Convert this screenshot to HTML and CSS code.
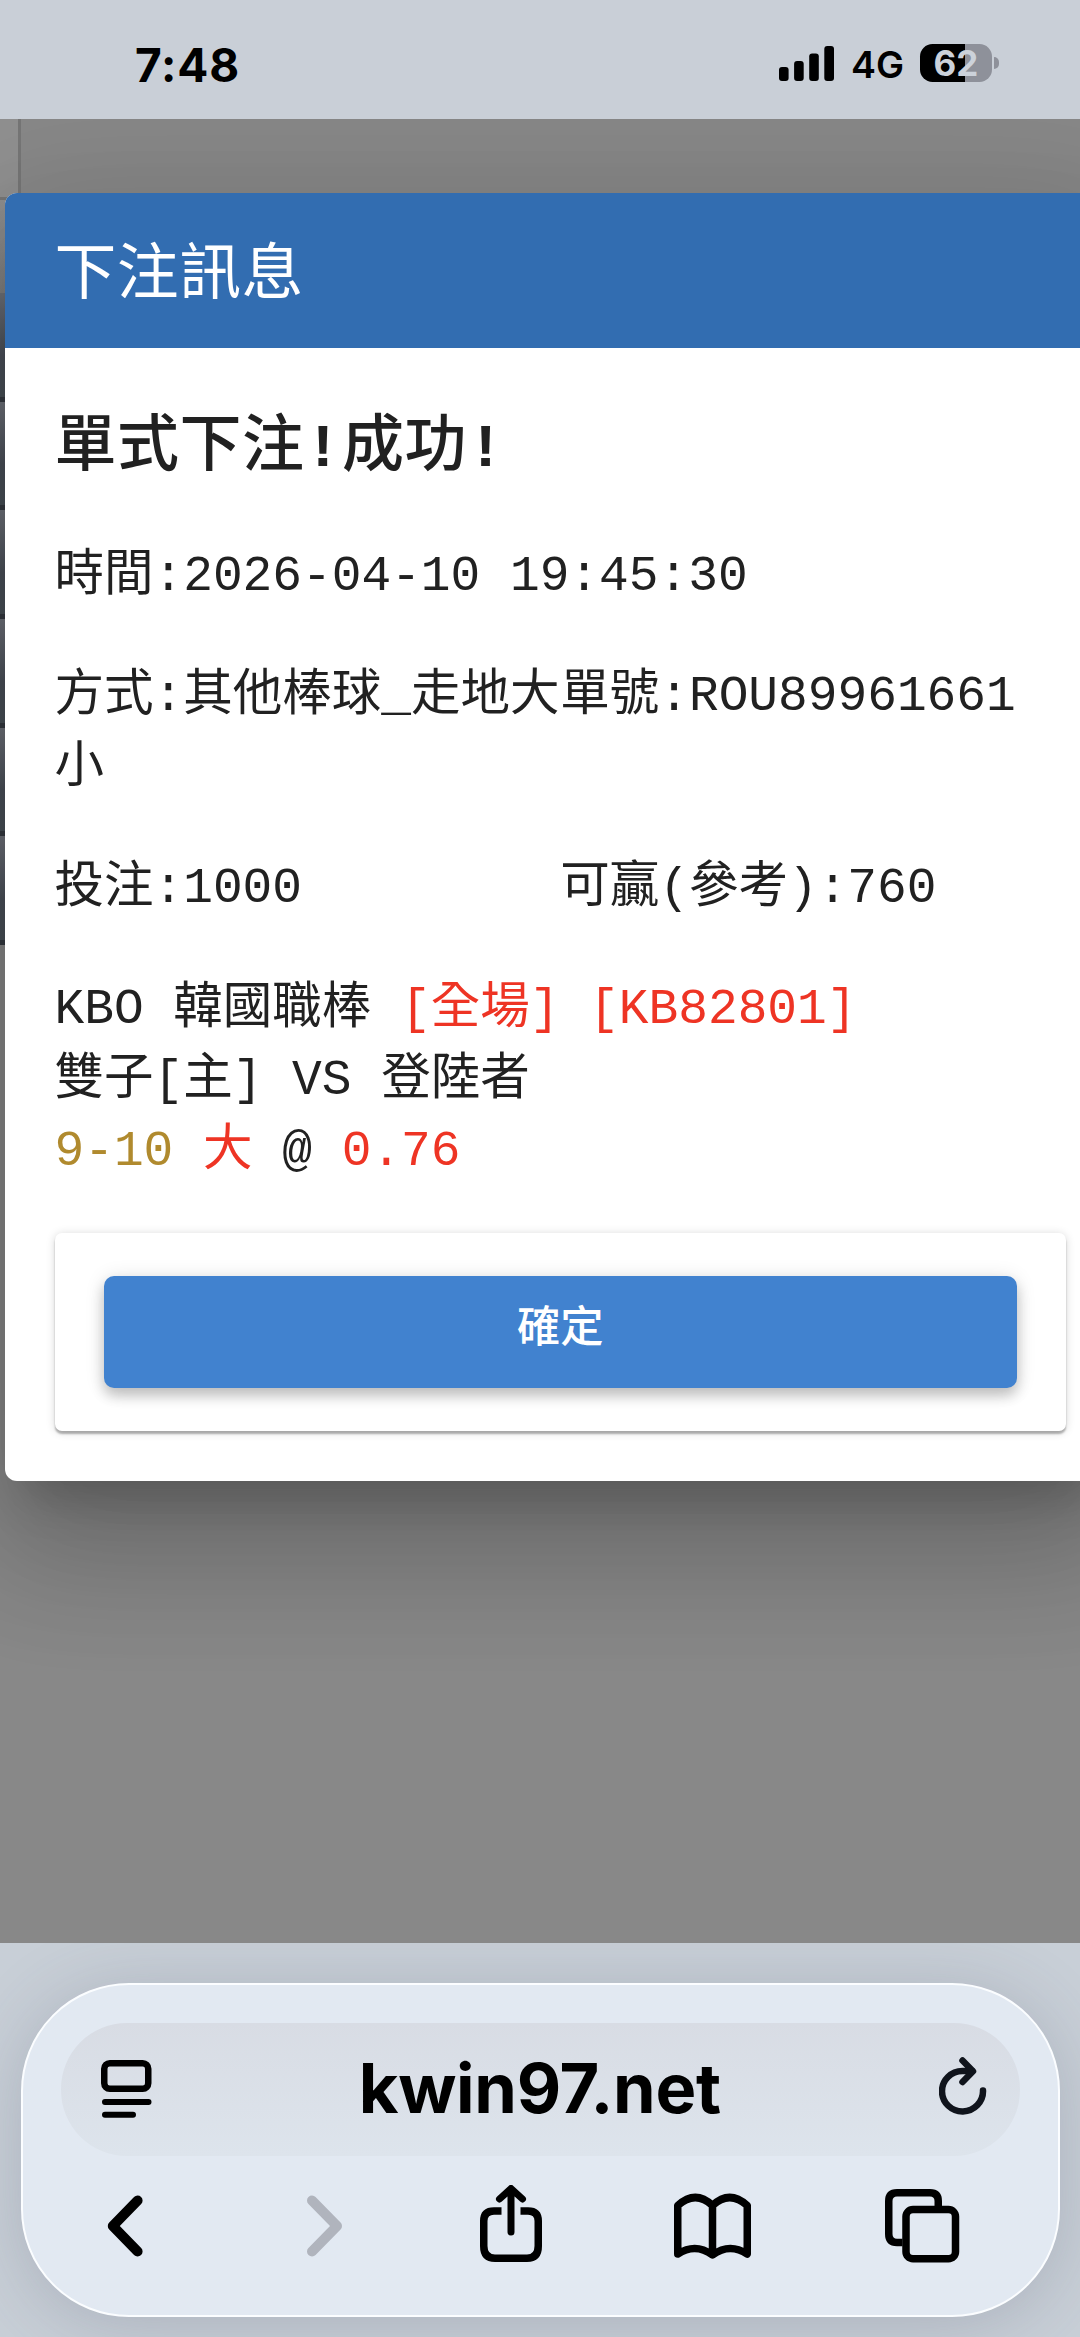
FILE: index.html
```html
<!DOCTYPE html>
<html lang="zh-Hant">
<head>
<meta charset="utf-8">
<title>下注訊息</title>
<link rel="stylesheet" href="styles.css">
</head>
<body>
<header class="status">
  <span class="clock">7:48</span>
  <div class="indicators">
    <svg class="signal" width="55" height="35" viewBox="0 0 55 35">
      <rect x="0" y="21" width="9.6" height="14" rx="3"/>
      <rect x="15.1" y="15" width="9.6" height="20" rx="3"/>
      <rect x="30.2" y="7.5" width="9.6" height="27.5" rx="3"/>
      <rect x="45.3" y="0" width="9.7" height="35" rx="3"/>
    </svg>
    <span class="network">4G</span>
    <span class="battery">62</span>
    <span class="battery-cap"></span>
  </div>
</header>

<main class="viewport">
  <div class="behind">
    <div class="behind-top"></div>
    <div class="behind-head"></div>
    <div class="behind-row"></div>
    <div class="behind-row"></div>
    <div class="behind-row"></div>
    <div class="behind-row"></div>
    <div class="behind-row"></div>
    <div class="behind-row"></div>
    <div class="behind-rest"></div>
  </div>
  <section class="dialog">
    <h1 class="dialog-title">下注訊息</h1>
    <div class="dialog-body">
      <h2 class="result">單式下注<b>!</b>成功<b>!</b></h2>
      <p class="line">時間:2026-04-10 19:45:30</p>
      <div class="pair">
        <p class="line">方式:其他棒球_走地大<br>小</p>
        <p class="line">單號:ROU89961661</p>
      </div>
      <div class="pair">
        <p class="line">投注:1000</p>
        <p class="line">可贏(參考):760</p>
      </div>
      <p class="line">KBO 韓國職棒 <span class="red">[全場] [KB82801]</span><br>雙子[主] VS 登陸者<br><span class="gold">9-10</span> <span class="red">大</span> @ <span class="red">0.76</span></p>
      <div class="card"><button class="confirm" type="button">確定</button></div>
    </div>
  </section>
</main>

<footer class="browser">
  <div class="pill">
    <div class="address">
      <svg width="51" height="58" viewBox="0 0 51 58" fill="none" stroke="#000" stroke-linecap="round">
        <rect x="3.25" y="3.25" width="44" height="25.5" rx="5.5" stroke-width="6.5"/>
        <path d="M4 42H47.500M4 54.700H32" stroke-width="6"/>
      </svg>
      <span class="host">kwin97.net</span>
      <svg width="48" height="64" viewBox="0 0 48 64" fill="none" stroke="#10141c" stroke-width="6.500" stroke-linecap="round" stroke-linejoin="round">
        <path d="M44 33.500A20.500 20.200 0 1 1 23.500 14H33"/>
        <path d="M23.500 3.500L34 14.200L23.500 25"/>
      </svg>
    </div>
    <nav class="tools">
      <svg class="back" width="36" height="76" viewBox="0 0 36 76" fill="none" stroke="#000" stroke-width="10" stroke-linecap="round" stroke-linejoin="round"><path d="M30.600 12.500L5.800 38L30.600 63.500"/></svg>
      <svg class="forward" width="36" height="76" viewBox="0 0 36 76" fill="none" stroke="#b0b4bd" stroke-width="10" stroke-linecap="round" stroke-linejoin="round"><path d="M5 12.500L30 38L5 63.500"/></svg>
      <svg class="share" width="62" height="80" viewBox="0 0 62 80" fill="none" stroke="#000" stroke-width="7.500" stroke-linejoin="round">
        <path d="M21.500 26H14Q3.750 26 3.750 36V61Q3.750 73.250 15 73.250H47Q58.250 73.250 58.250 61V36Q58.250 26 48 26H40.500"/>
        <path d="M31 47V4M19.500 14L31 3.500L42.500 14" stroke-width="7" stroke-linecap="round"/>
      </svg>
      <svg class="book" width="77" height="68" viewBox="0 0 77 68" fill="none" stroke="#000" stroke-width="7.500" stroke-linecap="round" stroke-linejoin="round">
        <path d="M38.500 12.500Q21.500-3.500 3.750 12.500V61Q21.500 49.500 38.500 62Q55.500 49.500 73.250 61V12.500Q55.500-3.500 38.500 12.500V61"/>
      </svg>
      <svg class="tabs" width="75" height="74" viewBox="0 0 75 74" fill="none" stroke="#000" stroke-width="7.500">
        <path d="M17.500 53.500H12Q3.750 53.500 3.750 45V12Q3.750 3.750 12 3.750H45Q53.250 3.750 53.250 12V17.500"/>
        <rect x="21" y="20.500" width="49.500" height="49.250" rx="7"/>
      </svg>
    </nav>
  </div>
</footer>
</body>
</html>
```

FILE: styles.css
```css
* { box-sizing: border-box; }

body {
  margin: 0;
  width: 1080px;
  height: 2337px;
  display: flex;
  flex-direction: column;
  overflow: hidden;
  background: #888;
  font-family: Inter, "Noto Sans CJK TC", sans-serif;
}

.status {
  height: 118.5px;
  flex: none;
  display: flex;
  justify-content: space-between;
  padding: 44px 81px 0 135px;
  background: #c9cfd7;
  color: #000;
}

.clock {
  font-size: 46px;
  line-height: 42px;
  font-weight: 700;
  letter-spacing: .9px;
}

.indicators { display: flex; height: 38px; align-items: center; }
.signal { margin-right: 17px; }
.network { width: 52px; margin-right: 17px; font-size: 37.500px; line-height: 41px; padding-top: 3px; font-weight: 600; white-space: nowrap; }

.battery {
  width: 72px;
  height: 38px;
  border-radius: 12.5px;
  background: linear-gradient(90deg, #000 62%, #8e919a 62%);
  color: #ccd2da;
  font-size: 35px;
  line-height: 38px;
  font-weight: 700;
  text-align: center;
}

.battery-cap {
  width: 5px;
  height: 12px;
  margin-left: 2px;
  border-radius: 0 6px 6px 0;
  background: #8e919a;
}

.viewport {
  position: relative;
  flex: 1;
  overflow: hidden;
  background: #888;
}

.behind {
  position: absolute;
  inset: 0 auto 0 0;
  width: 21px;
}

.behind-top { height: 81.500px; background: #909090; border: solid #767676; border-width: 0 3px 3px 0; }
.behind-head { width: 8px; height: 93px; background: linear-gradient(#8f8f8f, #808080); }
.behind-row { width: 8px; height: 108.700px; background: linear-gradient(#6f727a, #4b515a 60%, #485058); border-bottom: 5.500px solid #363a41; }
.behind-rest { width: 8px; height: 580px; background: #888; }

.dialog {
  position: relative;
  width: 1110px;
  height: 1288.500px;
  margin: 74px 0 0 5px;
  border-radius: 12px;
  overflow: hidden;
  background: #fff;
  color: #212121;
  box-shadow: 0 34px 46px -22px rgba(0, 0, 0, .2), 0 74px 118px 9px rgba(0, 0, 0, .14), 0 28px 142px 25px rgba(0, 0, 0, .12);
}

.dialog-title {
  height: 155px;
  margin: 0;
  padding-left: 49.500px;
  background: #326db1;
  color: #fff;
  font-family: "Noto Sans CJK TC", sans-serif;
  font-size: 61.900px;
  font-weight: 400;
  line-height: 149px;
  letter-spacing: .46px;
}

.dialog-body {
  padding: 58px 49px 0 49.500px;
  display: flex;
  flex-direction: column;
  gap: 49.300px;
  font-family: "Liberation Mono", "Noto Sans CJK TC", monospace;
}

.result {
  height: 87px;
  margin: 0;
  font-size: 62px;
  line-height: 87px;
  font-weight: 500;
  letter-spacing: .46px;
}

.line { margin: 0; font-size: 49.500px; line-height: 71.300px; white-space: nowrap; }
.pair { display: grid; grid-template-columns: 1fr 1fr; }
.red { color: #ee3424; }
.gold { color: #b08a2e; }

.card {
  height: 198.500px;
  margin-top: -5.500px;
  padding: 43.500px 49.500px;
  border-radius: 7px;
  background: #fff;
  box-shadow: 0 3px 2px rgba(0, 0, 0, .28), 0 1px 10px rgba(0, 0, 0, .16);
}

.confirm {
  display: block;
  width: 100%;
  height: 111.500px;
  padding: 0 0 16px;
  border: 0;
  border-radius: 10px;
  background: #4182cf;
  color: #fff;
  font: 500 43.300px/95px "Noto Sans CJK TC", sans-serif;
  box-shadow: 0 8px 13px rgba(0, 0, 0, .2), 0 2px 20px rgba(0, 0, 0, .12);
}

.browser {
  flex: none;
  height: 394.500px;
  padding: 40.500px 20.500px 20px;
  background: #c8cfd7;
  overflow: hidden;
}

.pill {
  height: 334px;
  padding: 38px 38px 0;
  border: 2px solid #fbfdff;
  border-radius: 108px;
  background: #e2e9f2;
  box-shadow: 0 8px 70px rgba(70, 75, 95, .22);
}

.address {
  height: 132.500px;
  padding: 0 32px 0 40.500px;
  display: flex;
  align-items: center;
  justify-content: space-between;
  border-radius: 66px;
  background: linear-gradient(#d8dce4, #dde4ec);
}

.host {
  margin-right: 12px;
  font-size: 68.500px;
  font-weight: 700;
  letter-spacing: -.3px;
  line-height: 80px;
}

.tools { display: flex; padding-top: 29px; }
.tools svg { flex: none; }
.back { margin: 3px 0 0 46.500px; }
.forward { margin: 3px 0 0 163.500px; }
.share { margin-left: 137px; }
.book { margin: 8px 0 0 132.500px; }
.tabs { margin: 4px 0 0 134px; }
```
